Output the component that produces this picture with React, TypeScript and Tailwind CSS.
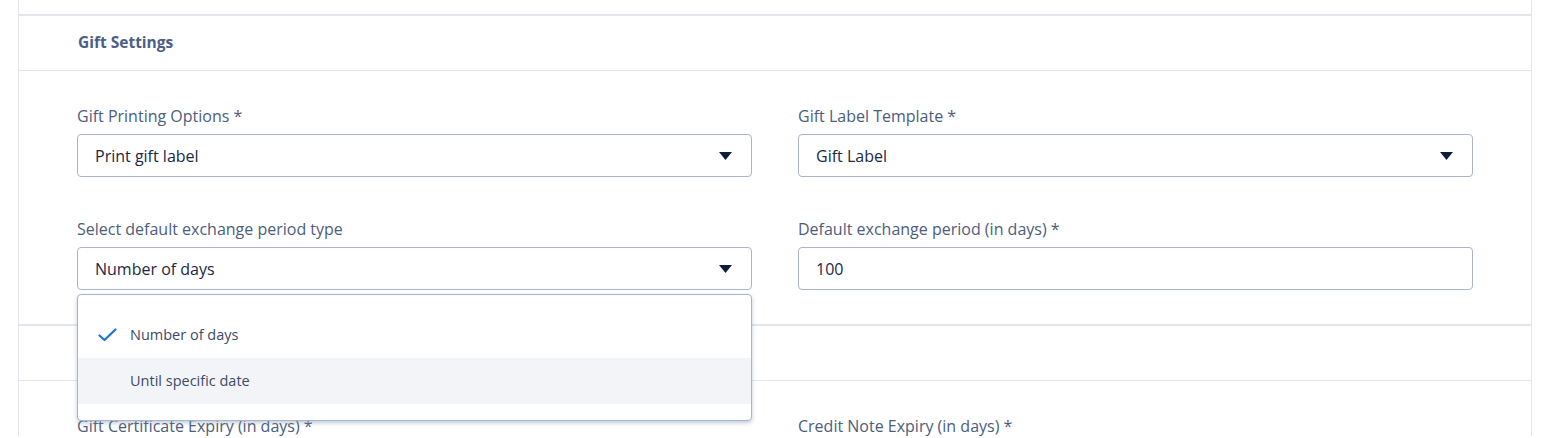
import React from 'react';

const Caret = () => (
  <svg width="13" height="8" viewBox="0 0 13 8" className="shrink-0">
    <path d="M0 0 H13 L6.5 8 Z" fill="#0f1d3a" />
  </svg>
);

const Field: React.FC<{ label: string; children: React.ReactNode }> = ({ label, children }) => (
  <div className="flex flex-col">
    <label className="text-[16px] leading-5 text-[#4d5d7c] mb-[8px]">{label}</label>
    {children}
  </div>
);

const SelectBox: React.FC<{ value: string }> = ({ value }) => (
  <div className="h-[43px] border border-[#a9b6c8] rounded-[4px] flex items-center justify-between pl-[17px] pr-[19px] bg-white">
    <span className="text-[16px] text-[#1b2846]">{value}</span>
    <Caret />
  </div>
);

const InputBox: React.FC<{ value: string }> = ({ value }) => (
  <div className="h-[43px] border border-[#a9b6c8] rounded-[4px] flex items-center pl-[17px] bg-white">
    <span className="text-[16px] text-[#1b2846]">{value}</span>
  </div>
);

export default function App() {
  return (
    <div className="w-[1549px] h-[438px] overflow-hidden bg-white" style={{ fontFamily: '"Open Sans", Lato, sans-serif' }}>
      <div className="ml-[18px] w-[1514px] border-l border-r border-[#e4e4ef]">
        {/* previous section tail */}
        <div className="h-[16px] border-b-2 border-[#e4e4ef]" />

        {/* Gift Settings */}
        <div className="h-[55px] border-b border-[#e4e4ef] flex items-center pl-[59px]">
          <h3 className="text-[15.5px] font-bold text-[#4b5e84]">Gift Settings</h3>
        </div>
        <div className="pl-[58px] pr-[58px] pt-[35px] pb-[34px] border-b-2 border-[#e4e4ef]">
          <div className="grid grid-cols-2 gap-x-[46px] gap-y-[42px]">
            <Field label="Gift Printing Options *">
              <SelectBox value="Print gift label" />
            </Field>
            <Field label="Gift Label Template *">
              <SelectBox value="Gift Label" />
            </Field>
            <Field label="Select default exchange period type">
              <div className="relative">
                <SelectBox value="Number of days" />
                <div className="absolute left-0 right-0 top-[47px] z-10 bg-white border border-[#a9b6c8] rounded-[4px] shadow-[0_2px_4px_rgba(120,140,170,0.45)] pt-[17px] pb-[16px]">
                  <div className="h-[46px] flex items-center pl-[20px]">
                    <svg width="19" height="14" viewBox="0 0 19 14" className="mr-[13px]">
                      <path d="M1.5 7.5 L6.5 12 L17.5 1.5" fill="none" stroke="#1f74d6" strokeWidth="2.2" strokeLinecap="round" strokeLinejoin="round" />
                    </svg>
                    <span className="text-[14.5px] text-[#3d4b66]">Number of days</span>
                  </div>
                  <div className="h-[46px] flex items-center pl-[52px] bg-[#f3f4f8]">
                    <span className="text-[14.5px] text-[#3d4b66]">Until specific date</span>
                  </div>
                </div>
              </div>
            </Field>
            <Field label="Default exchange period (in days) *">
              <InputBox value="100" />
            </Field>
          </div>
        </div>

        {/* next section */}
        <div className="h-[55px] border-b border-[#e4e4ef]" />
        <div className="pl-[58px] pr-[58px] pt-[35px]">
          <div className="grid grid-cols-2 gap-x-[46px]">
            <label className="text-[16px] leading-5 text-[#4d5d7c]">Gift Certificate Expiry (in days) *</label>
            <label className="text-[16px] leading-5 text-[#4d5d7c]">Credit Note Expiry (in days) *</label>
          </div>
        </div>
      </div>
    </div>
  );
}
